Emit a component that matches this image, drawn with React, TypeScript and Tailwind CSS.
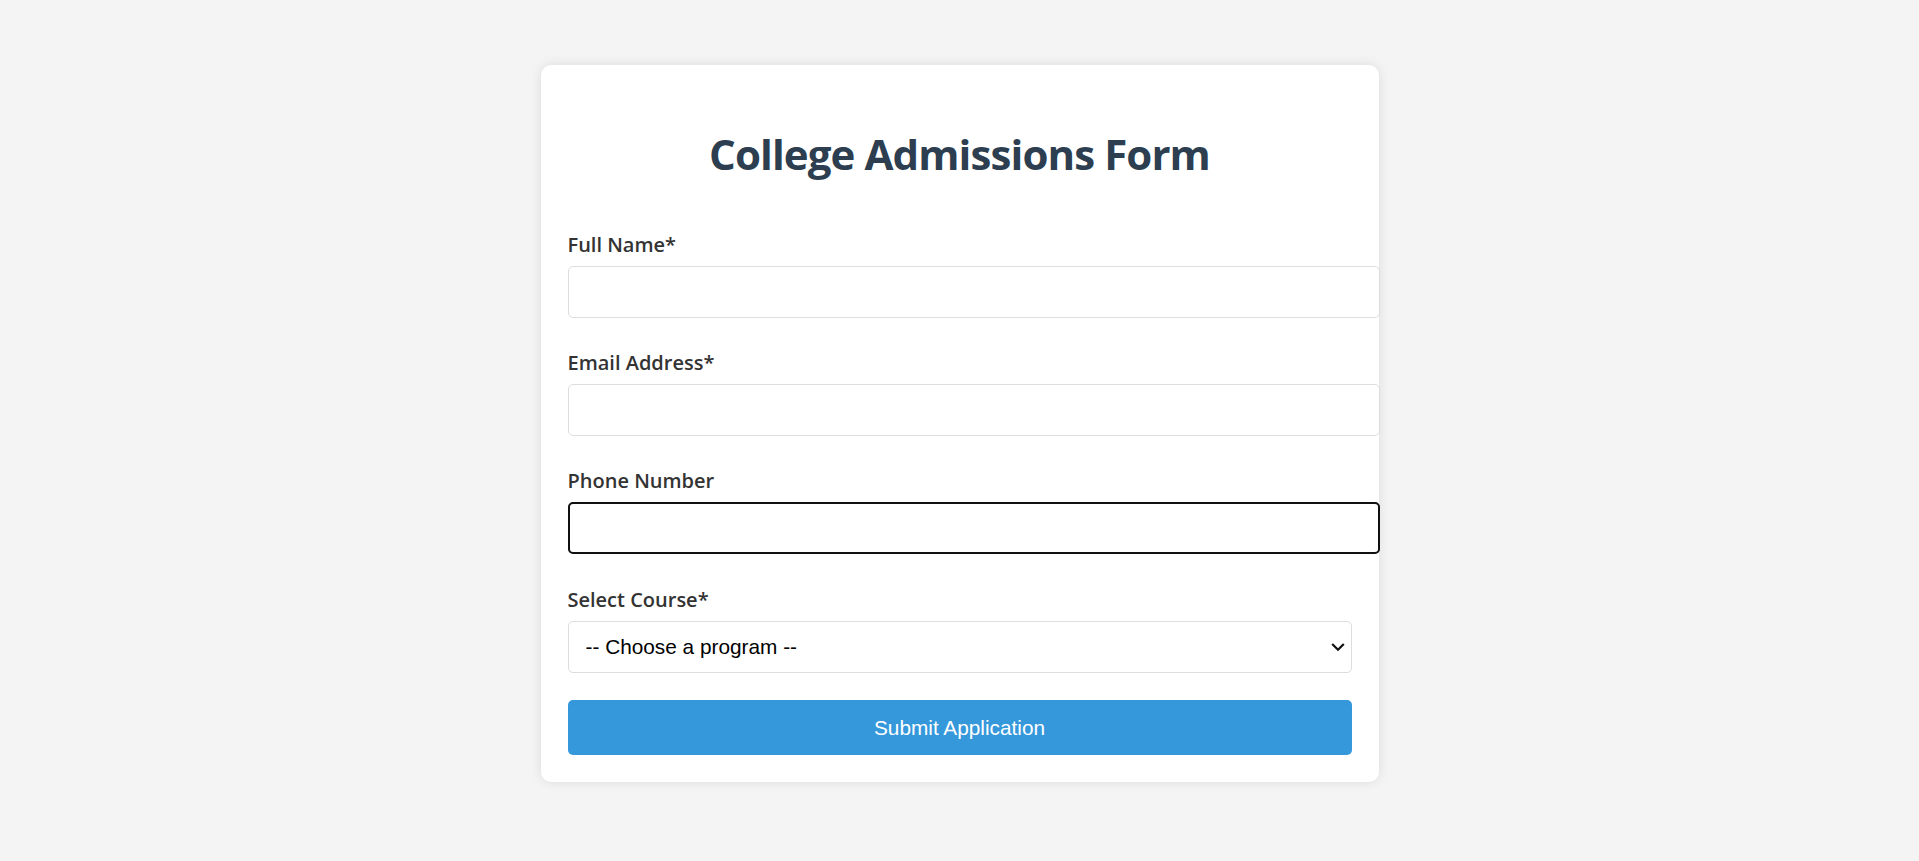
export default function App() {
  const fields = [
    { id: "name", label: "Full Name*", type: "text", focused: false },
    { id: "email", label: "Email Address*", type: "email", focused: false },
    { id: "phone", label: "Phone Number", type: "tel", focused: true },
  ];

  return (
    <div className="min-h-[861px] bg-[#f4f4f4] pt-[65px] font-['Open_Sans',sans-serif]">
      <div className="mx-auto w-[838px] rounded-[10px] bg-white p-[27px] shadow-[0_0_12px_rgba(0,0,0,0.1)]">
        <h1 className="mt-[34px] mb-[46px] text-center text-[42px] leading-[56px] font-bold tracking-[-0.9px] text-[#2c3e50]">
          College Admissions Form
        </h1>

        {fields.map((field) => (
          <div key={field.id} className="mb-[28px] flex flex-col">
            <label
              htmlFor={field.id}
              className="mb-[7px] pt-[3px] text-[20px] leading-[28px] font-semibold text-[#333]"
            >
              {field.label}
            </label>
            <div
              id={field.id}
              className={
                field.focused
                  ? "box-content h-[24px] w-full rounded-[5px] border border-[#ddd] px-[13px] py-[13px] outline-2 -outline-offset-2 outline-[#101010]"
                  : "box-content h-[24px] w-full rounded-[5px] border border-[#ddd] px-[13px] py-[13px]"
              }
            />
          </div>
        ))}

        <div className="mb-[27px] flex flex-col">
          <label
            htmlFor="course"
            className="mb-[7px] pt-[4px] text-[20px] leading-[28px] font-semibold text-[#333]"
          >
            Select Course*
          </label>
          <div className="relative">
            <select
              id="course"
              defaultValue=""
              className="h-[52px] w-full appearance-none rounded-[5px] border border-[#ddd] bg-white pl-[17px] pr-[40px] font-['Liberation_Sans',Arial,sans-serif] text-[20.8px] text-black"
            >
              <option value="">-- Choose a program --</option>
            </select>
            <svg
              className="pointer-events-none absolute top-1/2 right-[7px] -translate-y-1/2"
              width="14"
              height="9"
              viewBox="0 0 14 9"
              fill="none"
            >
              <path d="M1.2 1.5 L7 7.2 L12.8 1.5" stroke="#111" strokeWidth="2.2" />
            </svg>
          </div>
        </div>

        <button
          type="button"
          className="block h-[55px] w-full rounded-[5px] bg-[#3498db] font-['Liberation_Sans',Arial,sans-serif] text-[20.8px] text-white"
        >
          Submit Application
        </button>
      </div>
    </div>
  );
}
